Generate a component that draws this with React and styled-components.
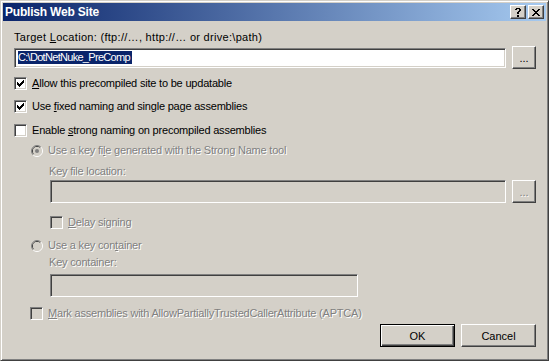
import React from 'react';
import styled, { createGlobalStyle } from 'styled-components';

const GlobalStyle = createGlobalStyle`
  body {
    margin: 0;
    background: #d4d0c8;
    font-family: "Liberation Sans", Arial, sans-serif;
    font-size: 11px;
    color: #000;
  }
`;

const Window = styled.div`
  width: 549px;
  height: 361px;
  box-sizing: border-box;
  background: #d4d0c8;
  border: 1px solid;
  border-color: #d4d0c8 #404040 #404040 #d4d0c8;
  box-shadow: inset 1px 1px #fff, inset -1px -1px #808080;
  padding: 2px;
  display: flex;
  flex-direction: column;
`;

const TitleBar = styled.div`
  height: 18px;
  flex-shrink: 0;
  display: flex;
  align-items: center;
  padding: 0 2px;
  background: linear-gradient(to right, #0a246a, #a6caf0);
`;

const TitleText = styled.div`
  flex: 1;
  color: #fff;
  font-weight: bold;
  font-size: 12px;
  letter-spacing: -0.2px;
  line-height: 18px;
`;

const CaptionButton = styled.div`
  width: 16px;
  height: 14px;
  box-sizing: border-box;
  margin-left: ${p => p.$ml || 0}px;
  background: #d4d0c8;
  border: 1px solid;
  border-color: #fff #404040 #404040 #fff;
  box-shadow: inset -1px -1px #808080;
  display: flex;
  align-items: center;
  justify-content: center;
`;

const Body = styled.div`
  display: flex;
  flex-direction: column;
  padding: 0 10px 0 11px;
  letter-spacing: -0.2px;
`;

const Row = styled.div`
  display: flex;
  align-items: center;
  height: ${p => p.$h || 13}px;
  margin-top: ${p => p.$mt || 0}px;
  padding-left: ${p => p.$indent || 0}px;
  justify-content: ${p => p.$end ? 'flex-end' : 'flex-start'};
  gap: ${p => p.$gap || 0}px;
  white-space: nowrap;
`;

const Label = styled.span`
  color: ${p => p.$disabled ? '#808080' : '#000'};
  text-shadow: ${p => p.$disabled ? '1px 1px 0 #fff' : 'none'};
  margin-left: ${p => p.$ml || 0}px;
  letter-spacing: ${p => p.$ls != null ? `${p.$ls}px` : 'inherit'};
  line-height: 13px;
`;

const Key = styled.span`
  text-decoration: underline;
`;

const TextBox = styled.div`
  box-sizing: border-box;
  height: ${p => p.$h || 20}px;
  width: ${p => p.$w ? `${p.$w}px` : 'auto'};
  flex: ${p => p.$w ? 'none' : 1};
  background: ${p => p.$disabled ? '#d4d0c8' : '#fff'};
  border: 1px solid;
  border-color: #808080 #fff #fff #808080;
  box-shadow: inset 1px 1px #404040, inset -1px -1px #d4d0c8;
  display: flex;
  align-items: center;
  padding: 0 3px;
`;

const Selection = styled.span`
  background: #0a246a;
  color: #fff;
  line-height: 13px;
  letter-spacing: -0.7px;
  padding-right: 2px;
`;

const PushButton = styled.div`
  box-sizing: border-box;
  width: ${p => p.$w || 75}px;
  height: 23px;
  flex-shrink: 0;
  background: #d4d0c8;
  border: 1px solid;
  border-color: ${p => p.$default ? '#000' : '#fff #404040 #404040 #fff'};
  box-shadow: ${p => p.$default
    ? 'inset 1px 1px #fff, inset -1px -1px #404040, inset -2px -2px #808080'
    : 'inset -1px -1px #808080'};
  display: flex;
  align-items: center;
  justify-content: center;
  letter-spacing: 0;
  color: ${p => p.$disabled ? '#808080' : '#000'};
  text-shadow: ${p => p.$disabled ? '1px 1px 0 #fff' : 'none'};
`;

const CheckFrame = styled.span`
  box-sizing: border-box;
  width: 13px;
  height: 13px;
  flex-shrink: 0;
  background: ${p => p.$disabled ? '#d4d0c8' : '#fff'};
  border: 1px solid;
  border-color: #808080 #fff #fff #808080;
  box-shadow: inset 1px 1px #404040, inset -1px -1px #d4d0c8;
  display: flex;
  align-items: center;
  justify-content: center;
`;

// draws a small bitmap glyph from rows of 'X'
const Pixels = ({ rows, color = '#000' }) => (
  <svg width={rows[0].length} height={rows.length} shapeRendering="crispEdges" style={{ display: 'block' }}>
    {rows.flatMap((r, y) => r.split('').map((c, x) => c === 'X'
      ? <rect key={`${x}-${y}`} x={x} y={y} width="1" height="1" fill={color} />
      : null))}
  </svg>
);

const CHECK = [
  '......X',
  '.....XX',
  'X...XXX',
  'XX.XXX.',
  'XXXXX..',
  '.XXX...',
  '..X....',
];

const CLOSE = [
  'XX....XX',
  '.XX..XX.',
  '..XXXX..',
  '...XX...',
  '..XXXX..',
  '.XX..XX.',
  'XX....XX',
];

const HELP = [
  '.XXXX.',
  'XX..XX',
  '....XX',
  '...XX.',
  '..XX..',
  '..XX..',
  '......',
  '..XX..',
  '..XX..',
];

const CheckBox = ({ checked, disabled }) => (
  <CheckFrame $disabled={disabled}>
    {checked && <Pixels rows={CHECK} color={disabled ? '#808080' : '#000'} />}
  </CheckFrame>
);

const Radio = ({ checked }) => (
  <svg width="12" height="12" style={{ display: 'block', flexShrink: 0 }}>
    <path d="M2.1 9.9 A5.5 5.5 0 0 1 9.9 2.1" fill="none" stroke="#808080" />
    <path d="M9.9 2.1 A5.5 5.5 0 0 1 2.1 9.9" fill="none" stroke="#fff" />
    <path d="M2.8 9.2 A4.5 4.5 0 0 1 9.2 2.8" fill="none" stroke="#404040" />
    <path d="M9.2 2.8 A4.5 4.5 0 0 1 2.8 9.2" fill="none" stroke="#d4d0c8" />
    <circle cx="6" cy="6" r="4" fill="#d4d0c8" />
    {checked && <circle cx="6" cy="6" r="2" fill="#808080" />}
  </svg>
);

export default function App() {
  return (
    <>
      <GlobalStyle />
      <Window>
        <TitleBar>
          <TitleText>Publish Web Site</TitleText>
          <CaptionButton><Pixels rows={HELP} /></CaptionButton>
          <CaptionButton $ml={2}><Pixels rows={CLOSE} /></CaptionButton>
        </TitleBar>
        <Body>
          <Row $mt={9} $h={14}>
            <Label $ls={0.3}>Target <Key>L</Key>ocation: (ftp://…, http://… or drive:\path)</Label>
          </Row>
          <Row $mt={2} $h={23} $gap={6}>
            <TextBox $h={20}><Selection>C:\DotNetNuke_PreComp</Selection></TextBox>
            <PushButton $w={24}>...</PushButton>
          </Row>
          <Row $mt={8}>
            <CheckBox checked />
            <Label $ml={5}><Key>A</Key>llow this precompiled site to be updatable</Label>
          </Row>
          <Row $mt={10}>
            <CheckBox checked />
            <Label $ml={5}>Use <Key>f</Key>ixed naming and single page assemblies</Label>
          </Row>
          <Row $mt={11}>
            <CheckBox />
            <Label $ml={5}>Enable <Key>s</Key>trong naming on precompiled assemblies</Label>
          </Row>
          <Row $mt={7} $indent={17}>
            <Radio checked />
            <Label $ml={5} $disabled>Use a key fi<Key>l</Key>e generated with the Strong Name tool</Label>
          </Row>
          <Row $mt={7} $h={14} $indent={35}>
            <Label $disabled>Key file location:</Label>
          </Row>
          <Row $mt={2} $h={23} $indent={36} $gap={6}>
            <TextBox $h={23} $disabled />
            <PushButton $w={24} $disabled>...</PushButton>
          </Row>
          <Row $mt={13} $indent={36}>
            <CheckBox disabled />
            <Label $ml={5} $disabled><Key>D</Key>elay signing</Label>
          </Row>
          <Row $mt={10} $indent={17}>
            <Radio />
            <Label $ml={5} $disabled>Use a key con<Key>t</Key>ainer</Label>
          </Row>
          <Row $mt={3} $h={14} $indent={35}>
            <Label $disabled>Key container:</Label>
          </Row>
          <Row $mt={5} $h={23} $indent={36}>
            <TextBox $h={23} $w={308} $disabled />
          </Row>
          <Row $mt={10} $indent={16}>
            <CheckBox disabled />
            <Label $ml={5} $disabled><Key>M</Key>ark assemblies with AllowPartiallyTrustedCallerAttribute (APTCA)</Label>
          </Row>
          <Row $mt={4} $h={23} $end $gap={6}>
            <PushButton $default>OK</PushButton>
            <PushButton>Cancel</PushButton>
          </Row>
        </Body>
      </Window>
    </>
  );
}
